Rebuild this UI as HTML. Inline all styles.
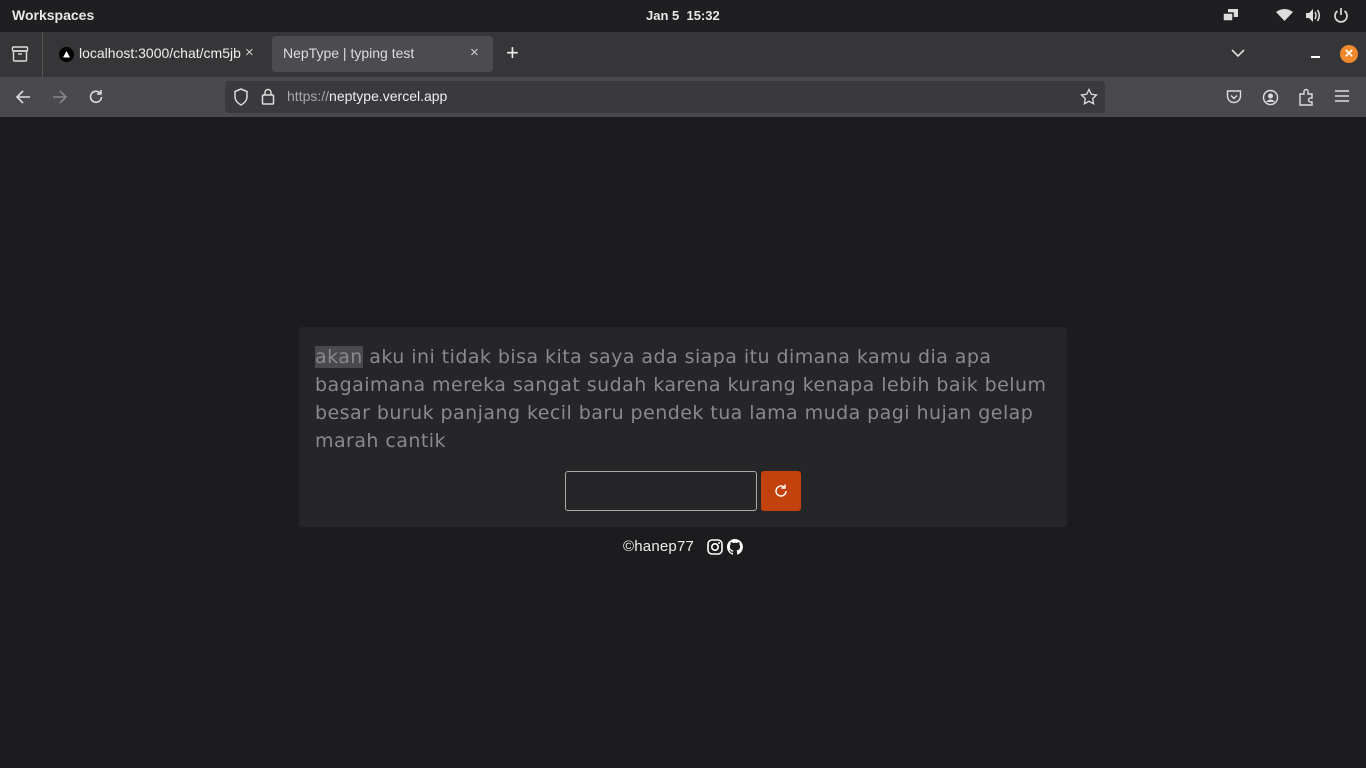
<!DOCTYPE html>
<html><head><meta charset="utf-8"><style>
*{margin:0;padding:0;box-sizing:border-box}
body{width:1366px;height:768px;background:#1c1b1e;font-family:"Liberation Sans","DejaVu Sans",sans-serif;overflow:hidden;position:relative;color:#fff}
.top{position:absolute;left:0;top:0;width:1366px;height:32px;background:#1f1e21;}
.tabs{position:absolute;left:0;top:32px;width:1366px;height:45px;background:#363538}
.nav{position:absolute;left:0;top:77px;width:1366px;height:40px;background:#4a494d}
.a{position:absolute;white-space:nowrap}
svg{position:absolute}
</style></head><body>
<div class="top">
 <div class="a" style="left:12px;top:7px;font-size:14px;font-weight:bold;color:#e8e8e8">Workspaces</div>
 <div class="a" style="left:646px;top:8px;font-size:13px;font-weight:bold;color:#e8e8e8">Jan 5&nbsp; 15:32</div>
 <svg style="left:1222px;top:8px" width="18" height="16" viewBox="0 0 18 16"><rect x="6" y="1" width="10" height="8" fill="#ddd"/><rect x="1" y="5" width="10" height="8" fill="#ddd" stroke="#1f1e21" stroke-width="1.5"/></svg>
 <svg style="left:1276px;top:9px" width="17" height="12" viewBox="0 0 17 12"><path d="M0 3Q8.5-3 17 3L8.5 12Z" fill="#ddd"/></svg>
 <svg style="left:1305px;top:8px" width="16" height="15" viewBox="0 0 16 15"><path d="M1 5h3l4-4v13l-4-4H1z" fill="#ddd"/><path d="M10 4q2 3.5 0 7M12.5 2q3.5 5.5 0 11" stroke="#ddd" stroke-width="1.5" fill="none"/></svg>
 <svg style="left:1333px;top:7px" width="16" height="16" viewBox="0 0 16 16"><path d="M4.5 4A6 6 0 1 0 11.5 4M8 1v7" stroke="#ddd" stroke-width="1.7" fill="none"/></svg>
</div>
<div class="tabs">
 <svg style="left:11px;top:14px" width="18" height="16" viewBox="0 0 18 16"><rect x="1.5" y="1" width="15" height="4" rx="1" fill="none" stroke="#ddd" stroke-width="1.4"/><rect x="2.5" y="5" width="13" height="10" rx="1" fill="none" stroke="#ddd" stroke-width="1.4"/><path d="M7 8h4" stroke="#ddd" stroke-width="1.4"/></svg>
 <div class="a" style="left:42px;top:0;width:1px;height:45px;background:#555"></div>
 <svg style="left:59px;top:15px" width="15" height="15" viewBox="0 0 15 15"><circle cx="7.5" cy="7.5" r="7.5" fill="#000"/><path d="M7.5 4L11 10.5H4z" fill="#fff"/></svg>
 <div class="a" style="left:79px;top:13px;font-size:14px;color:#eee">localhost:3000/chat/cm5jb</div>
 <div class="a" style="left:245px;top:12px;font-size:15px;color:#ccc">×</div>
 <div class="a" style="left:272px;top:4px;width:221px;height:36px;background:#4c4b50;border-radius:4px"></div>
 <div class="a" style="left:283px;top:13px;font-size:14px;color:#ddd">NepType | typing test</div>
 <div class="a" style="left:470px;top:12px;font-size:15px;color:#ccc">×</div>
 <div class="a" style="left:506px;top:8px;font-size:22px;color:#eee">+</div>
 <svg style="left:1231px;top:17px" width="14" height="9" viewBox="0 0 14 9"><path d="M1 1l6 6 6-6" stroke="#ddd" stroke-width="1.6" fill="none"/></svg>
 <div class="a" style="left:1311px;top:24px;width:9px;height:2px;background:#fff"></div>
 <div class="a" style="left:1340px;top:13px;width:18px;height:18px;border-radius:50%;background:#f0882e;color:#fff;font-size:15px;font-weight:bold;text-align:center;line-height:18px">×</div>
</div>
<div class="nav">
 <svg style="left:15px;top:12px" width="16" height="16" viewBox="0 0 16 16"><path d="M15 8H2M8 2L2 8l6 6" stroke="#ddd" stroke-width="1.6" fill="none"/></svg>
 <svg style="left:52px;top:12px" width="16" height="16" viewBox="0 0 16 16"><path d="M1 8h13M8 2l6 6-6 6" stroke="#888" stroke-width="1.6" fill="none"/></svg>
 <svg style="left:88px;top:12px" width="16" height="16" viewBox="0 0 16 16"><path d="M13.5 8A5.5 5.5 0 1 1 12 4M13 1v4H9" stroke="#ddd" stroke-width="1.6" fill="none"/></svg>
 <div class="a" style="left:225px;top:4px;width:880px;height:32px;background:#3a393d;border-radius:4px"></div>
 <svg style="left:233px;top:11px" width="16" height="18" viewBox="0 0 16 18"><path d="M8 1L2 3.5v5c0 4 3 7 6 8.5 3-1.5 6-4.5 6-8.5v-5z" stroke="#ddd" stroke-width="1.5" fill="none"/></svg>
 <svg style="left:261px;top:11px" width="14" height="17" viewBox="0 0 14 17"><rect x="1.5" y="7" width="11" height="9" rx="1" stroke="#ddd" stroke-width="1.5" fill="none"/><path d="M4 7V4.5a3 3 0 0 1 6 0V7" stroke="#ddd" stroke-width="1.5" fill="none"/></svg>
 <div class="a" style="left:287px;top:11px;font-size:14px;color:#aaa">https://<span style="color:#eee">neptype.vercel.app</span></div>
 <svg style="left:1080px;top:11px" width="18" height="18" viewBox="0 0 18 18"><path d="M9 1.5l2.3 4.8 5.2.7-3.8 3.6.9 5.2L9 13.3l-4.6 2.5.9-5.2L1.5 7l5.2-.7z" stroke="#ddd" stroke-width="1.3" fill="none"/></svg>
 <svg style="left:1226px;top:12px" width="16" height="16" viewBox="0 0 16 16"><path d="M1.5 2h13v5a6.5 6.5 0 0 1-13 0z" stroke="#ddd" stroke-width="1.4" fill="none"/><path d="M5 6.5l3 3 3-3" stroke="#ddd" stroke-width="1.4" fill="none"/></svg>
 <svg style="left:1262px;top:12px" width="17" height="17" viewBox="0 0 17 17"><circle cx="8.5" cy="8.5" r="7" stroke="#ddd" stroke-width="1.4" fill="none"/><circle cx="8.5" cy="7" r="2.5" fill="#ddd"/><path d="M4 13q4.5-5 9 0" fill="#ddd"/></svg>
 <svg style="left:1298px;top:11px" width="17" height="18" viewBox="0 0 17 18"><path d="M2 6h4V3.5a2 2 0 0 1 4 0V6h4v4h-1.5a2 2 0 0 0 0 4H14v3H2z" stroke="#ddd" stroke-width="1.4" fill="none"/></svg>
 <svg style="left:1335px;top:13px" width="14" height="12" viewBox="0 0 14 12"><path d="M0 1h14M0 6h14M0 11h14" stroke="#ddd" stroke-width="1.4"/></svg>
</div>
<div class="a" style="left:299px;top:327px;width:768px;height:200px;background:#262528;border-radius:3px"></div>
<div class="a" style="left:315px;top:343px;font-family:'DejaVu Sans',sans-serif;font-size:19px;line-height:28px;color:#8a898c;letter-spacing:0.45px">
<span style="background:#4a494d">akan</span> aku ini tidak bisa kita saya ada siapa itu dimana kamu dia apa<br>bagaimana mereka sangat sudah karena kurang kenapa lebih baik belum<br>besar buruk panjang kecil baru pendek tua lama muda pagi hujan gelap<br>marah cantik</div>
<div class="a" style="left:565px;top:471px;width:192px;height:40px;border:1px solid #aaa;border-radius:3px;background:#262528"></div>
<div class="a" style="left:761px;top:471px;width:40px;height:40px;background:#c2410c;border-radius:3px"></div>
<svg style="left:773px;top:483px" width="16" height="16" viewBox="0 0 16 16"><path d="M13 8A5 5 0 1 1 11 4M12 1.5V5H8.5" stroke="#fff" stroke-width="1.4" fill="none"/></svg>
<div class="a" style="left:623px;top:538px;font-size:15px;color:#eee;letter-spacing:0.2px">©hanep77</div>
<svg style="left:707px;top:539px" width="16" height="16" viewBox="0 0 16 16"><rect x="1" y="1" width="14" height="14" rx="4" stroke="#fff" stroke-width="1.6" fill="none"/><circle cx="8" cy="8" r="3.2" stroke="#fff" stroke-width="1.6" fill="none"/><circle cx="12" cy="4" r="1" fill="#fff"/></svg>
<svg style="left:727px;top:539px" width="16" height="16" viewBox="0 0 16 16"><path d="M8 0a8 8 0 0 0-2.5 15.6c.4 0 .5-.2.5-.4v-1.5c-2.2.5-2.7-1-2.7-1-.4-.9-.9-1.2-.9-1.2-.7-.5.1-.5.1-.5.8.1 1.2.8 1.2.8.7 1.2 1.9.9 2.3.7.1-.5.3-.9.5-1.1-1.8-.2-3.6-.9-3.6-4 0-.9.3-1.6.8-2.1-.1-.2-.4-1 .1-2.1 0 0 .7-.2 2.2.8a7.5 7.5 0 0 1 4 0c1.5-1 2.2-.8 2.2-.8.4 1.1.2 1.9.1 2.1.5.6.8 1.3.8 2.1 0 3.1-1.9 3.8-3.6 4 .3.3.6.8.6 1.5v2.2c0 .2.1.5.6.4A8 8 0 0 0 8 0z" fill="#fff"/></svg>
</body></html>
